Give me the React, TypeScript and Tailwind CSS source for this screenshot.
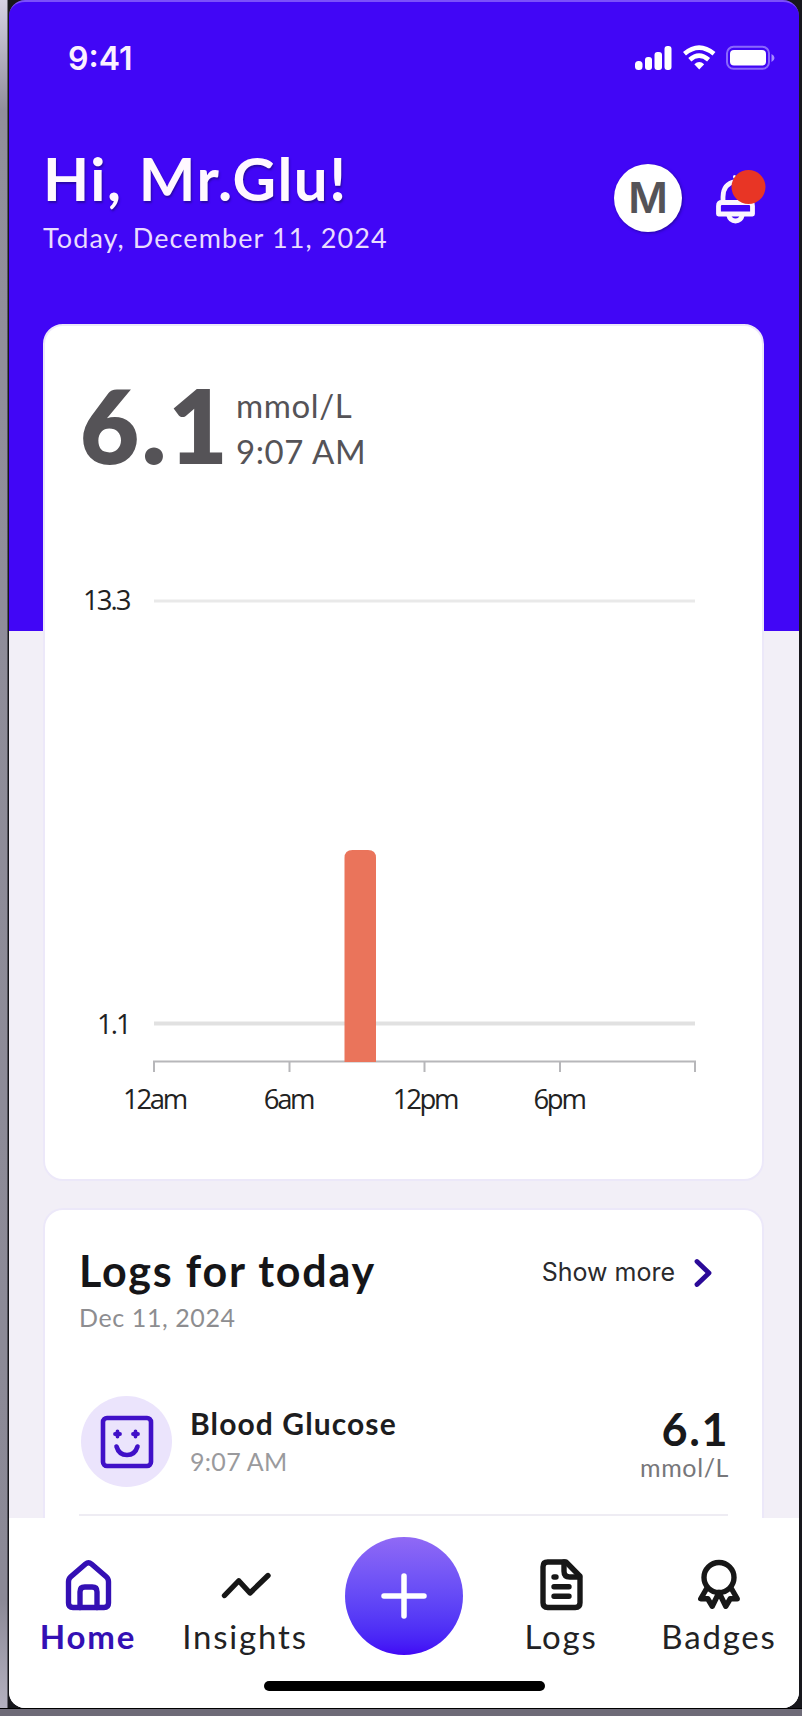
import React from "react";

const lato = "font-['Lato',sans-serif]";

function StatusBar() {
  return (
    <div className="flex h-[110px] shrink-0 items-start justify-between pl-[59px] pr-[24px] pt-[37px]">
      <span className="font-['Inter',sans-serif] text-[32px] font-semibold leading-[40px] text-[#fbf0ff]">9:41</span>
      <svg width="142" height="26" viewBox="0 0 142 26" fill="#fff" className="mt-[5px]">
        <rect x="2" y="17" width="7.5" height="9" rx="3.5" />
        <rect x="12" y="13" width="7" height="13" rx="3" />
        <rect x="21.500" y="8" width="7.500" height="18" rx="3" />
        <rect x="31.500" y="2" width="7" height="24" rx="3" />
        <g fill="none" stroke="#fff" strokeWidth="4.600">
          <path d="M51.500 9.800Q66 -2.500 81 9.800" />
          <path d="M56.800 15.800Q66 7.500 75.600 15.800" />
        </g>
        <path d="M66.200 25.500L61.300 20.300Q66.200 15.800 71.200 20.300Z" />
        <rect x="94" y="2.800" width="42" height="22" rx="6.500" fill="none" stroke="#8a68fc" strokeWidth="2" />
        <rect x="97" y="6" width="36" height="15.500" rx="4" />
        <path d="M138.500 10Q141.500 11.500 141.500 14T138.500 18Z" fill="#a68cff" />
      </svg>
    </div>
  );
}

function Header() {
  return (
    <div className="flex h-[212px] shrink-0 justify-between pl-[34px] pr-[31px] pt-[27px]">
      <div className={lato}>
        <h1 className="text-[60px] font-bold leading-[78px] tracking-[1.5px] text-[#fff8ff] [text-shadow:1px_2px_2px_#2a08a8]">Hi, Mr.Glu!</h1>
        <p className="mt-[3px] text-[27px] leading-[36px] tracking-[1.1px] text-[#e9dcff]">Today, December 11, 2024</p>
      </div>
      <div className="flex items-start pt-[25px]">
        <div className="flex size-[68px] items-center justify-center rounded-full bg-white font-['Inter',sans-serif] text-[43px] font-semibold text-[#555357] shadow-[1px_1px_3px_#2507a0]">
          <span className="-mt-px">M</span>
        </div>
        <svg width="54" height="60" viewBox="0 0 54 60" className="ml-[32px] mt-[4px]" fill="none" stroke="#fbf5ff" strokeWidth="4.800" strokeLinejoin="round">
          <path d="M9 34V29C9 20 13 15 21.500 13.500S35 18 35 27V34" />
          <path d="M20.500 8.500V9" strokeLinecap="round" strokeWidth="3" />
          <path d="M4.500 46V38Q4.500 34.500 8 34.500H35Q38.500 34.500 38.500 38V46Z" />
          <path d="M14.500 46.500Q16 53 21.500 53T28.500 46.500" />
          <circle cx="34.500" cy="19" r="17" fill="#e83525" stroke="none" />
        </svg>
      </div>
    </div>
  );
}

function Chart() {
  return (
    <svg width="719" height="600" viewBox="45 560 719 600" className="block font-['Open_Sans',sans-serif]" fontSize="27.500" fill="#222">
      <g letterSpacing="-2">
        <text x="83" y="610">13.3</text>
        <text x="97" y="1034">1.1</text>
      </g>
      <path d="M154 601H695" stroke="#e9e9e9" strokeWidth="3" />
      <path d="M154 1023.500H695" stroke="#e1e1e1" strokeWidth="4" />
      <path d="M154 1072V1061.500H695V1072M289.500 1061V1072M424.500 1061V1072M560 1061V1072" fill="none" stroke="#b7b7ba" strokeWidth="2" />
      <path d="M344.500 1062V858Q344.500 850 352.500 850H368Q376 850 376 858V1062Z" fill="#ea745b" />
      <g textAnchor="middle" letterSpacing="-2.300">
        <text x="154.500" y="1108.500">12am</text>
        <text x="288.500" y="1108.500">6am</text>
        <text x="425" y="1108.500">12pm</text>
        <text x="559" y="1108.500">6pm</text>
      </g>
    </svg>
  );
}

function GlucoseCard() {
  return (
    <section className="h-[857px] shrink-0 overflow-hidden rounded-[20px] border-2 border-[#ece8f9] bg-white">
      <div className={`${lato} flex h-[234px] pl-[35px] pt-[47px] text-[#555357]`}>
        <span className="w-[156px] text-[102px] font-extrabold leading-[104px] tracking-[2.5px]">6.1</span>
        <div className="pt-[9px] text-[33px] leading-[46px] tracking-[0.6px]">
          <p>mmol/L</p>
          <p>9:07 AM</p>
        </div>
      </div>
      <Chart />
    </section>
  );
}

function LogsCard() {
  return (
    <section className={`${lato} mt-[27px] flex h-[310px] shrink-0 flex-col overflow-hidden rounded-t-[20px] border-2 border-b-0 border-[#ece8f9] bg-white pl-[34px] pr-[34px]`}>
      <div className="flex h-[138px] shrink-0 justify-between pt-[33px]">
        <div>
          <h2 className="text-[43px] font-bold leading-[56px] tracking-[1.8px] text-[#151518]">Logs for today</h2>
          <p className="text-[25px] leading-[36px] tracking-[0.6px] text-[#8d8d90]">Dec 11, 2024</p>
        </div>
        <div className="flex h-[59px] items-center pr-[15px]">
          <span className="font-['Inter',sans-serif] text-[25px] text-[#2a2a2d]">Show more</span>
          <svg width="20" height="32" viewBox="0 0 20 32" fill="none" stroke="#2b0a98" strokeWidth="4.800" strokeLinecap="round" strokeLinejoin="round" className="ml-[18px]">
            <path d="M4 4.500L16 16L4 27.500" />
          </svg>
        </div>
      </div>
      <div className="flex h-[168px] shrink-0 border-b-2 border-[#eeecf3] pt-[48px]">
        <div className="ml-[2px] flex size-[91px] shrink-0 items-center justify-center rounded-full bg-[#ebe4fc]">
          <svg width="54" height="54" viewBox="0 0 54 54" fill="none" stroke="#4010c8" strokeWidth="4.600" strokeLinecap="round">
            <rect x="3" y="3" width="48" height="48" rx="4" />
            <path d="M15 19H20M17.500 16.500V21.500M33 19H38M35.500 16.500V21.500" strokeWidth="3.800" />
            <path d="M16.500 31.500Q19 40 27 40T37.500 31.500" />
          </svg>
        </div>
        <div className="ml-[18px] pt-[7px]">
          <p className="text-[30px] font-bold leading-[40px] tracking-[1.1px] text-[#1d1d20]">Blood Glucose</p>
          <p className="text-[25px] leading-[36px] tracking-[0.3px] text-[#9a9a9d]">9:07 AM</p>
        </div>
        <div className="ml-auto pt-[10px] text-right">
          <p className="-mr-px text-[45px] font-bold leading-[46px] tracking-[1.5px] text-[#19191b]">6.1</p>
          <p className="-mr-px text-[25px] leading-[30px] tracking-[0.6px] text-[#77777a]">mmol/L</p>
        </div>
      </div>
    </section>
  );
}

function TabItem({ label, icon, active }: { label: string; icon: React.ReactNode; active?: boolean }) {
  return (
    <div className={active ? "flex flex-col items-center font-bold text-[#3410b4]" : "flex flex-col items-center text-[#222224]"}>
      <div className={active ? "" : "text-[#171717]"}>
        <svg width="60" height="60" viewBox="0 0 24 24" fill="none" stroke="currentColor" strokeWidth="2.150" strokeLinecap="round" strokeLinejoin="round">{icon}</svg>
      </div>
      <span className="mt-px pl-[1px] text-[33px] leading-[40px] tracking-[1.8px]">{label}</span>
    </div>
  );
}

function TabBar() {
  return (
    <nav className={`${lato} flex h-[190px] shrink-0 flex-col items-center bg-white`}>
      <div className="grid h-[163px] w-full grid-cols-[157px_157px_162px_151px_165px] pt-[37px]">
        <TabItem active label="Home" icon={<><path d="M4.200 10.700Q4.200 9.500 5.100 8.700L11 3.600Q12.200 2.600 13.400 3.600L19.300 8.700Q20.200 9.500 20.200 10.700V19.200Q20.200 21 18.400 21H6Q4.200 21 4.200 19.200Z" /><path d="M8.800 21V14.700Q8.800 12.800 10.700 12.800H13.700Q15.600 12.800 15.600 14.700V21" /></>} />
        <TabItem label="Insights" icon={<path d="M3.800 16.200L9.500 10.300L14 15.200L21.200 8.200" />} />
        <div className="-mt-[18px] flex size-[118px] items-center justify-center justify-self-center rounded-full bg-linear-to-b from-[#9069f5] to-[#4104f6]">
          <svg width="48" height="48" viewBox="0 0 48 48" stroke="#fff" strokeWidth="5.500" strokeLinecap="round">
            <path d="M24 4V44M4 24H44" />
          </svg>
        </div>
        <TabItem label="Logs" icon={<><path d="M14 2.800H6.700Q4.800 2.800 4.800 4.700V19.100Q4.800 21 6.700 21H17.700Q19.600 21 19.600 19.100V8.500Z" /><path d="M13.200 2.800V6.500Q13.200 8.800 15.500 8.800H19.400M9.200 8.800H10M9.200 12.700H15.200M9.200 16.500H15.200" /></>} />
        <TabItem label="Badges" icon={<><circle cx="12" cy="9" r="6" /><path d="M7 13.500L4.700 17.500L7.500 17.500L9.300 20.500L12 15L14.700 20.500L16.500 17.500L19.300 17.500L17 13.500" /></>} />
      </div>
      <div className="h-[10px] w-[281px] rounded-full bg-black" />
    </nav>
  );
}

export default function App() {
  return (
    <div className="flex h-[1716px] w-[802px] flex-col overflow-hidden bg-[#6e6b78]">
      <div className="flex h-[1709px] shrink-0 border-b border-black bg-[linear-gradient(90deg,transparent_7px,#17171c_8px),linear-gradient(#d6d2e4_0,#918f9b_110px,#8b8996_1600px,#b4b1c0_100%)]">
        <main className="ml-[9px] flex h-[1708px] w-[790px] flex-col overflow-hidden rounded-[16px] border-t-2 border-[#7c50fa] bg-[linear-gradient(#4106f6_629px,#f2eff7_629px)]">
          <StatusBar />
          <Header />
          <div className="flex flex-col pl-[34px] pr-[35px]">
            <GlucoseCard />
            <LogsCard />
          </div>
          <TabBar />
        </main>
      </div>
    </div>
  );
}
